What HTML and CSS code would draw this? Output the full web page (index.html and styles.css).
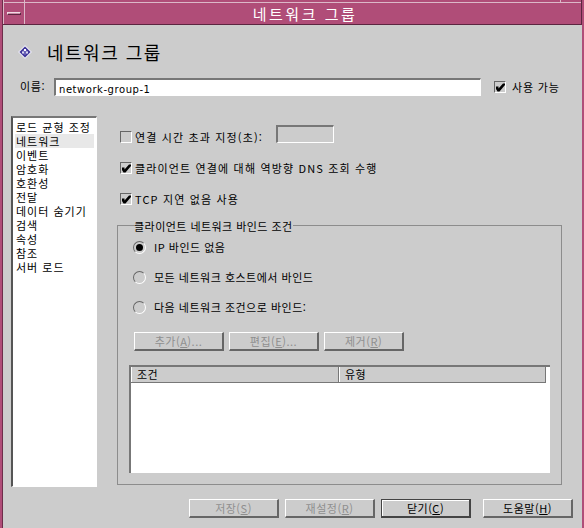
FILE: index.html
```html
<!DOCTYPE html>
<html lang="ko">
<head>
<meta charset="utf-8">
<title>네트워크 그룹</title>
<link rel="stylesheet" href="styles.css">
</head>
<body>
<div class="window">
  <div class="titlebar">
    <div class="menu-btn"><span class="menu-dash"></span></div>
    <div class="title">네트워크 그룹</div>
  </div>
  <div class="content">
    <div class="heading">
      <svg class="logo" width="14" height="14" viewBox="0 0 14 14"><path d="M7 0L14 7L7 14L0 7Z" fill="#e8e8f4"/><path d="M7 1.500L12.500 7L7 12.500L1.500 7Z" fill="#3a2f96"/><path d="M7 3.500L10.500 7L7 10.500L3.500 7Z" fill="#6a62b8"/><rect x="6" y="4" width="2" height="2" fill="#fff"/><rect x="4" y="6.500" width="2" height="2" fill="#d8d8f0"/><rect x="8" y="6.500" width="2" height="2" fill="#d8d8f0"/></svg>
      <h1>네트워크 그룹</h1>
    </div>
    <div class="name-row">
      <label class="name-label">이름:</label>
      <div class="field name-field">network-group-1</div>
      <span class="check on"><svg width="10" height="10" viewBox="0 0 10 10"><path d="M1 4.500H3.500V6.500L8 1.500H10V3L4.500 9.500H2.500L1 7Z" fill="#000"/></svg></span>
      <span class="txt wide">사용 가능</span>
    </div>
    <div class="main">
      <ul class="nav">
        <li>로드 균형 조정</li>
        <li class="sel">네트워크</li>
        <li>이벤트</li>
        <li>암호화</li>
        <li>호환성</li>
        <li>전달</li>
        <li>데이터 숨기기</li>
        <li>검색</li>
        <li>속성</li>
        <li>참조</li>
        <li>서버 로드</li>
      </ul>
      <div class="panel">
        <div class="row row-timeout">
          <span class="check low"></span>
          <span class="txt low">연결 시간 초과 지정(초):</span>
          <div class="field timeout-field"></div>
        </div>
        <div class="row row-dns">
          <span class="check on"><svg width="10" height="10" viewBox="0 0 10 10"><path d="M1 4.500H3.500V6.500L8 1.500H10V3L4.500 9.500H2.500L1 7Z" fill="#000"/></svg></span>
          <span class="txt">클라이언트 연결에 대해 역방향 DNS 조회 수행</span>
        </div>
        <div class="row row-tcp">
          <span class="check on"><svg width="10" height="10" viewBox="0 0 10 10"><path d="M1 4.500H3.500V6.500L8 1.500H10V3L4.500 9.500H2.500L1 7Z" fill="#000"/></svg></span>
          <span class="txt">TCP 지연 없음 사용</span>
        </div>
        <fieldset class="group">
          <legend>클라이언트 네트워크 바인드 조건</legend>
          <div class="radio-row first"><span class="radio on"></span><span class="txt">IP 바인드 없음</span></div>
          <div class="radio-row"><span class="radio"></span><span class="txt">모든 네트워크 호스트에서 바인드</span></div>
          <div class="radio-row"><span class="radio"></span><span class="txt">다음 네트워크 조건으로 바인드:</span></div>
          <div class="btn-row">
            <button class="btn off">추가(<u>A</u>)...</button>
            <button class="btn off">편집(<u>E</u>)...</button>
            <button class="btn off narrow">제거(<u>R</u>)</button>
          </div>
          <div class="table">
            <div class="thead">
              <div class="th">조건</div>
              <div class="th">유형</div>
            </div>
          </div>
        </fieldset>
      </div>
    </div>
    <div class="footer">
      <button class="btn off">저장(<u>S</u>)</button>
      <button class="btn off">재설정(<u>R</u>)</button>
      <button class="btn default">닫기(<u>C</u>)</button>
      <button class="btn help">도움말(<u>H</u>)</button>
    </div>
  </div>
</div>
</body>
</html>
```
FILE: styles.css
```css
* { box-sizing: border-box; }
html, body { margin: 0; padding: 0; }
body {
  width: 584px;
  height: 528px;
  overflow: hidden;
  background: #cccccc;
  font-family: "Noto Sans CJK KR", "Liberation Sans", sans-serif;
  font-size: 11px;
  color: #000;
}
.window {
  width: 584px;
  height: 528px;
  display: flex;
  flex-direction: column;
  background: #cccccc;
  border-left: 2px solid #b04d78;
  border-right: 2px solid #b04d78;
  box-shadow: inset 1px 0 0 #6e2d4a;
}
.titlebar {
  height: 25px;
  flex: none;
  display: flex;
  background:
    linear-gradient(#dcb8c8, #dcb8c8) 557px 0 / 1px 3px no-repeat,
    linear-gradient(#b04d78 2px, #dcb8c8 2px, #dcb8c8 3px, #b04d78 3px);
  border-bottom: 1px solid #5c2540;
  border-right: 1px solid #5c2540;
  margin-left: 1px;
}
.menu-btn {
  width: 22px;
  flex: none;
  display: flex;
  align-items: center;
  justify-content: center;
  padding-top: 3px;
  border-right: 1px solid #dcb8c8;
  border-left: 1px solid #dcb8c8;
}
.menu-dash {
  width: 14px;
  height: 3px;
  background: #c98aa6;
  border: 1px solid #5c2540;
  border-top-color: #f0dce4;
  border-left-color: #f0dce4;
}
.title {
  flex: 1;
  text-align: center;
  color: #fff;
  font-size: 15px;
  line-height: 21px;
  padding-top: 3px;
  padding-left: 4px;
  letter-spacing: 2.5px;
}
.content {
  flex: 1;
  display: flex;
  flex-direction: column;
  padding: 0 0 0 9px;
}
.heading {
  display: flex;
  align-items: center;
  height: 26px;
  margin-top: 14px;
  padding-left: 7px;
}
.logo { flex: none; }
h1 {
  margin: 0 0 0 15px;
  font-size: 18px;
  font-weight: 400;
  line-height: 26px;
  letter-spacing: 1.5px;
}
.name-row {
  display: flex;
  align-items: center;
  height: 18px;
  margin-top: 13px;
}
.name-label { width: 43px; padding-left: 9px; letter-spacing: .6px; margin-top: -2px; }
.field {
  background: #fff;
  border-style: solid;
  border-width: 2px 1px 1px 2px;
  border-color: #777 #fff #fff #777;
}
.name-field {
  width: 427px;
  height: 18px;
  font-family: "DejaVu Sans", sans-serif;
  font-size: 10px;
  line-height: 19px;
  padding-left: 3px;
  letter-spacing: .55px;
}
.check {
  width: 12px;
  height: 12px;
  flex: none;
  display: inline-flex;
  align-items: center;
  justify-content: center;
  background: #cccccc;
  border-style: solid;
  border-width: 1px;
  border-color: #666 #fff #fff #666;
}
.name-row .check { margin-left: 13px; }
.txt {
  margin-left: 3px;
  letter-spacing: 1.15px;
  white-space: nowrap;
  line-height: 14px;
}
.txt.wide { margin-left: 6px; letter-spacing: .85px; }
.low { position: relative; top: 3px; }
.main {
  display: flex;
  margin-top: 20px;
  height: 371px;
}
.nav {
  list-style: none;
  margin: 0;
  padding: 2px 2px 0 2px;
  width: 86px;
  height: 371px;
  background: #fff;
  border-style: solid;
  border-width: 2px 1px 1px 2px;
  border-color: #777 #fff #fff #555;
  font-size: 11px;
  letter-spacing: 1px;
}
.nav li {
  height: 14px;
  line-height: 14px;
  padding-left: 1px;
  white-space: nowrap;
}
.nav .sel { background: #e8e8e8; }
.panel {
  flex: 1;
  padding-left: 20px;
  padding-right: 20px;
  display: flex;
  flex-direction: column;
}
.row {
  display: flex;
  align-items: center;
  margin-left: 3px;
}
.row-timeout { height: 18px; margin-top: 9px; }
.timeout-field {
  width: 58px;
  height: 18px;
  margin-left: 13px;
  background: #cccccc;
}
.row-dns { height: 14px; margin-top: 18px; }
.row-tcp { height: 14px; margin-top: 17px; }
.group {
  margin: 12px 0 0 0;
  padding: 0 11px 11px 11px;
  height: 267px;
  min-width: 0;
  border: 1px solid #8c8c8c;
}
legend {
  padding: 0;
  margin-left: 5px;
  line-height: 14px;
  letter-spacing: .45px;
  position: relative;
  top: 1px;
}
.radio-row {
  display: flex;
  align-items: center;
  height: 14px;
  margin-top: 16px;
  margin-left: 4px;
}
.radio-row.first { margin-top: 8px; }
.radio {
  width: 13px;
  height: 13px;
  flex: none;
  display: inline-flex;
  align-items: center;
  justify-content: center;
  border-radius: 50%;
  border: 1px solid;
  border-color: #666 #fff #fff #666;
}
.radio.on::after {
  content: "";
  width: 7px;
  height: 7px;
  border-radius: 50%;
  background: #000;
}
.radio + .txt { margin-left: 8px; letter-spacing: .5px; }
.btn-row {
  display: flex;
  gap: 5px;
  margin-top: 18px;
  margin-left: 5px;
}
.btn {
  width: 90px;
  height: 19px;
  padding: 0;
  font: inherit;
  letter-spacing: .5px;
  line-height: 15px;
  background: #cccccc;
  color: #000;
  border-style: solid;
  border-width: 1px 2px 2px 1px;
  border-color: #fff #666 #666 #fff;
}
.btn.narrow { width: 80px; }
.btn.off { color: #8f8f8f; }
.btn.default {
  border-width: 1px 2px 2px 1px;
  border-color: #444 #444 #444 #444;
  box-shadow: inset 1px 1px 0 #fff;
}
.table {
  width: 421px;
  height: 108px;
  margin-top: 14px;
  background: #fff;
  border-style: solid;
  border-width: 2px 0 0 2px;
  border-color: #777;
  padding-right: 4px;
}
.thead {
  display: grid;
  grid-template-columns: 208px 207px;
  height: 16px;
  border-bottom: 1px solid #777;
  background: #cccccc;
}
.th {
  padding-left: 6px;
  line-height: 15px;
  letter-spacing: .5px;
  border-right: 1px solid #777;
  box-shadow: inset 1px 0 0 #fff;
}
.footer {
  display: flex;
  margin-top: 12px;
  padding-left: 178px;
}
.footer .btn { margin-right: 6px; }
.footer .btn.help { margin-left: 6px; }
```
